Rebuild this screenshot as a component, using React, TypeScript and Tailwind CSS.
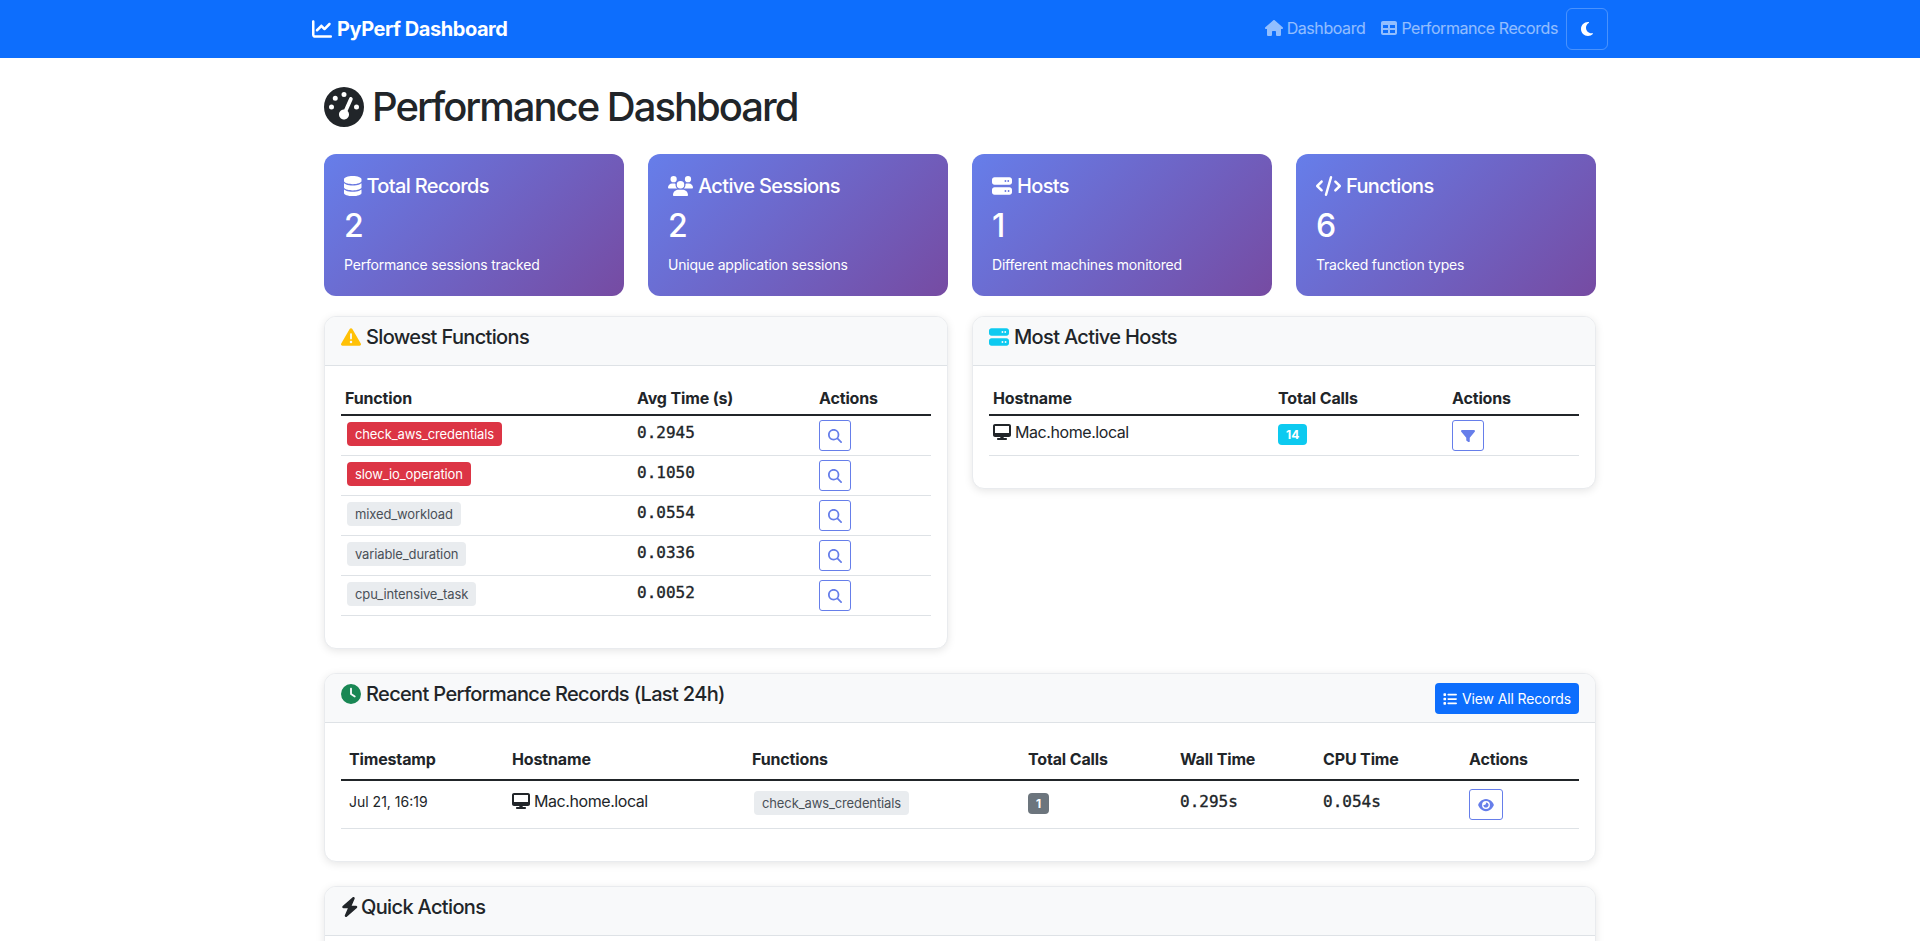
import {
  FaBolt,
  FaChartLine,
  FaClock,
  FaCode,
  FaDatabase,
  FaDesktop,
  FaEye,
  FaFilter,
  FaGaugeHigh,
  FaHouse,
  FaList,
  FaMagnifyingGlass,
  FaMoon,
  FaServer,
  FaTable,
  FaTriangleExclamation,
  FaUsers,
} from "react-icons/fa6";
import type { ReactNode } from "react";

const stats = [
  { icon: <FaDatabase className="h-5 w-[17.5px]" />, title: "Total Records", value: "2", detail: "Performance sessions tracked" },
  { icon: <FaUsers className="h-5 w-[25px]" />, title: "Active Sessions", value: "2", detail: "Unique application sessions" },
  { icon: <FaServer className="size-5" />, title: "Hosts", value: "1", detail: "Different machines monitored" },
  { icon: <FaCode className="h-5 w-[25px]" />, title: "Functions", value: "6", detail: "Tracked function types" },
];

const slowest = [
  { name: "check_aws_credentials", time: "0.2945", slow: true },
  { name: "slow_io_operation", time: "0.1050", slow: true },
  { name: "mixed_workload", time: "0.0554", slow: false },
  { name: "variable_duration", time: "0.0336", slow: false },
  { name: "cpu_intensive_task", time: "0.0052", slow: false },
];

function Card({ icon, title, action, children, className = "" }: { icon: ReactNode; title: string; action?: ReactNode; children?: ReactNode; className?: string }) {
  return (
    <div className={`overflow-hidden rounded-xl border border-[#e9ebee] bg-white shadow-[0_2px_8px_rgba(0,0,0,0.1)] ${className}`}>
      <div className="flex justify-between border-b border-[#dee2e6] bg-[#f8f9fa] px-4 py-2">
        <h5 className="mb-2 flex h-6 items-center gap-[5px] text-[20px] leading-6 font-medium tracking-[-0.65px]">
          {icon}
          {title}
        </h5>
        {action}
      </div>
      {children}
    </div>
  );
}

function ActionButton({ children }: { children: ReactNode }) {
  return (
    <button className="flex h-[31px] items-center rounded-[3px] border border-[#667eea] bg-white px-2 text-[#667eea]">
      {children}
    </button>
  );
}

const thBase = "border-b-2 border-[#212529] text-left font-bold tracking-[-0.15px]";
const mono = "font-['DejaVu_Sans_Mono',monospace] leading-[26px] [-webkit-text-stroke:0.35px_#212529]";

export default function App() {
  return (
    <div className="h-[941px] overflow-hidden bg-white font-[Inter,sans-serif] text-base leading-6 text-[#212529]">
      <nav className="h-[58px] bg-[#0d6efd]">
        <div className="mx-auto flex h-full w-[1320px] items-center justify-between px-3">
          <a className="flex items-center gap-[5px] text-[20px] font-bold tracking-[-0.45px] text-white">
            <FaChartLine className="size-5" />
            PyPerf Dashboard
          </a>
          <div className="flex items-center tracking-[-0.42px] text-white/55">
            <a className="mb-[2px] flex items-center gap-1 px-2">
              <FaHouse className="h-4 w-[18px]" />
              Dashboard
            </a>
            <a className="mb-[2px] flex items-center gap-1 px-2">
              <FaTable className="size-4" />
              Performance Records
            </a>
            <button className="flex h-[42px] w-[42px] items-center justify-center rounded-md border border-white/25 text-white">
              <FaMoon className="size-4" />
            </button>
          </div>
        </div>
      </nav>

      <main className="mx-auto w-[1320px] px-6 pt-6">
        <h1 className="mb-6 flex h-12 items-center gap-2 pt-[2px] text-[40px] leading-[48px] font-medium tracking-[-2px]">
          <FaGaugeHigh className="size-10" />
          Performance Dashboard
        </h1>

        <div className="mb-5 grid grid-cols-4 gap-6">
          {stats.map((s) => (
            <div key={s.title} className="rounded-xl bg-[linear-gradient(135deg,#667eea_0%,#764ba2_100%)] p-5 text-white">
              <h5 className="mb-2 flex h-6 items-center gap-[5px] text-[20px] font-medium tracking-[-0.65px]">
                {s.icon}
                {s.title}
              </h5>
              <div className="mb-2 pt-[1px] text-[32px] leading-[38px] font-medium">{s.value}</div>
              <div className="text-sm leading-[23px] tracking-[-0.2px]">{s.detail}</div>
            </div>
          ))}
        </div>

        <div className="mb-6 grid grid-cols-2 items-start gap-6">
          <Card icon={<FaTriangleExclamation className="size-5 text-[#ffc107]" />} title="Slowest Functions">
            <div className="p-4">
              <table className="mb-4 w-full table-fixed">
                <colgroup>
                  <col className="w-[292px]" />
                  <col className="w-[182px]" />
                  <col />
                </colgroup>
                <thead>
                  <tr>
                    <th className={`${thBase} p-1`}>Function</th>
                    <th className={`${thBase} p-1`}>Avg Time (s)</th>
                    <th className={`${thBase} p-1`}>Actions</th>
                  </tr>
                </thead>
                <tbody>
                  {slowest.map((row) => (
                    <tr key={row.name} className="border-b border-[#dee2e6]">
                      <td className="p-1 align-top">
                        <span className={`mt-[2px] ml-[2px] block w-fit rounded px-2 py-1 text-[13px] leading-4 tracking-[-0.12px] ${row.slow ? "bg-[#dc3545] text-white" : "bg-[#e9ecef] text-[#495057]"}`}>
                          {row.name}
                        </span>
                      </td>
                      <td className={`p-1 align-top ${mono}`}>{row.time}</td>
                      <td className="p-1 align-top">
                        <ActionButton>
                          <FaMagnifyingGlass className="size-[14px]" />
                        </ActionButton>
                      </td>
                    </tr>
                  ))}
                </tbody>
              </table>
            </div>
          </Card>

          <Card icon={<FaServer className="size-5 text-[#0dcaf0]" />} title="Most Active Hosts">
            <div className="p-4">
              <table className="mb-4 w-full table-fixed">
                <colgroup>
                  <col className="w-[285px]" />
                  <col className="w-[174px]" />
                  <col />
                </colgroup>
                <thead>
                  <tr>
                    <th className={`${thBase} p-1`}>Hostname</th>
                    <th className={`${thBase} p-1`}>Total Calls</th>
                    <th className={`${thBase} p-1`}>Actions</th>
                  </tr>
                </thead>
                <tbody>
                  <tr className="border-b border-[#dee2e6]">
                    <td className="p-1 align-top">
                      <span className="flex items-center gap-1 tracking-[-0.43px]">
                        <FaDesktop className="size-[18px]" />
                        Mac.home.local
                      </span>
                    </td>
                    <td className="p-1 align-top">
                      <span className="mt-1 block w-fit rounded bg-[#0dcaf0] px-2 py-1 text-xs leading-[13px] font-bold text-white">14</span>
                    </td>
                    <td className="p-1 align-top">
                      <ActionButton>
                        <FaFilter className="size-[14px]" />
                      </ActionButton>
                    </td>
                  </tr>
                </tbody>
              </table>
            </div>
          </Card>
        </div>

        <Card
          className="mb-6"
          icon={<FaClock className="size-5 text-[#198754]" />}
          title="Recent Performance Records (Last 24h)"
          action={
            <button className="mt-px -mb-px flex h-[31px] items-center gap-[5px] rounded bg-[#0d6efd] px-2 text-sm tracking-[-0.13px] text-white">
              <FaList className="size-[14px]" />
              View All Records
            </button>
          }
        >
          <div className="p-4">
            <table className="mb-4 w-full table-fixed">
              <colgroup>
                <col className="w-[163px]" />
                <col className="w-[240px]" />
                <col className="w-[276px]" />
                <col className="w-[152px]" />
                <col className="w-[143px]" />
                <col className="w-[146px]" />
                <col />
              </colgroup>
              <thead>
                <tr>
                  {["Timestamp", "Hostname", "Functions", "Total Calls", "Wall Time", "CPU Time", "Actions"].map((h) => (
                    <th key={h} className={`${thBase} p-2`}>{h}</th>
                  ))}
                </tr>
              </thead>
              <tbody>
                <tr className="border-b border-[#dee2e6]">
                  <td className="p-2 align-top text-sm leading-[26px]">Jul 21, 16:19</td>
                  <td className="p-2 align-top">
                    <span className="flex items-center gap-1 tracking-[-0.43px]">
                      <FaDesktop className="size-[18px]" />
                      Mac.home.local
                    </span>
                  </td>
                  <td className="p-2 align-top">
                    <span className="mt-[2px] ml-[2px] block w-fit rounded bg-[#e9ecef] px-2 py-1 text-[13px] leading-4 tracking-[-0.12px] text-[#495057]">check_aws_credentials</span>
                  </td>
                  <td className="p-2 align-top">
                    <span className="mt-1 block w-fit rounded bg-[#6c757d] px-2 py-1 text-xs leading-[13px] font-bold text-white">1</span>
                  </td>
                  <td className={`p-2 align-top ${mono}`}>0.295s</td>
                  <td className={`p-2 align-top ${mono}`}>0.054s</td>
                  <td className="p-2 align-top">
                    <ActionButton>
                      <FaEye className="h-[14px] w-4" />
                    </ActionButton>
                  </td>
                </tr>
              </tbody>
            </table>
          </div>
        </Card>

        <Card icon={<FaBolt className="-mr-[2.5px] h-5 w-[17.5px]" />} title="Quick Actions">
          <div className="h-24" />
        </Card>
      </main>
    </div>
  );
}
